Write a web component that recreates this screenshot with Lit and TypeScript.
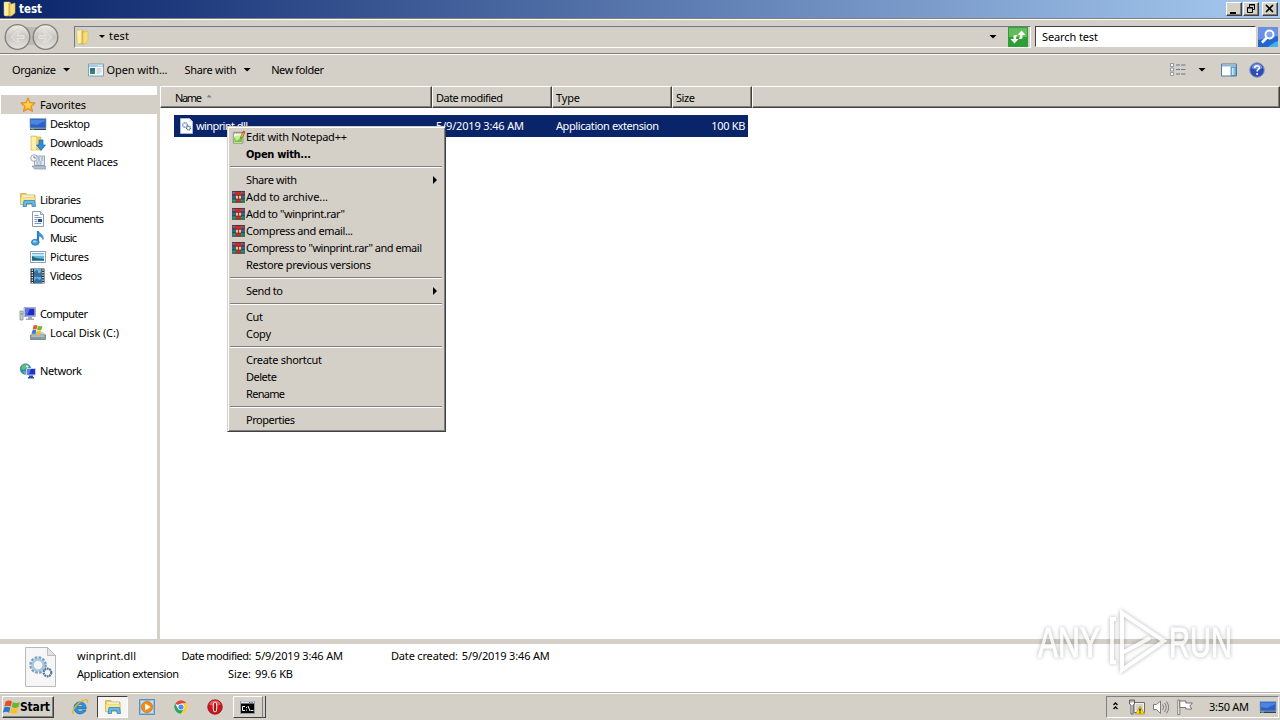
import { LitElement, html, svg, css, nothing } from 'lit';
import type { TemplateResult } from 'lit';
import { customElement, property } from 'lit/decorators.js';
import { classMap } from 'lit/directives/class-map.js';

type Glyph = TemplateResult<2>;

const glyphs: Record<string, Glyph> = {
  folder: svg`
    <path d="M2 1h6l1 2v12H3l-1-1z" fill="#e9c95f" stroke="#c9a53c" stroke-width=".6"/>
    <path d="M2 1.500 7 1v13l-4.500.8z" fill="#fbeea6"/>
    <path d="M8 3.500 13 2v10l-3 2.500-2 .5z" fill="#f6dd7c" stroke="#d8b54a" stroke-width=".6"/>
    <path d="M7 2v13" stroke="#c3a03c" stroke-width=".8"/>`,
  star: svg`
    <path d="M8 .8l2.100 4.700 5.200.5-3.900 3.500 1.200 5.100L8 12l-4.600 2.600 1.200-5.100L.7 6l5.200-.5z" fill="#ffa51f" stroke="#d9801a" stroke-width=".8"/>
    <path d="M8 3l1.400 3.300 3.300.4-2.500 2.200.7 3L8 10.400 5.200 12l.6-3.200L3.300 6.700l3.300-.4z" fill="#ffd24a"/>`,
  desktop: svg`
    <path d="M0 2.500h16V12H0z" fill="#2352b4" stroke="#8fa9cf" stroke-width=".8"/>
    <path d="M1 3.500h14v4L8 9 1 11z" fill="#4a86e0"/><path d="M1 8l6 1 8-4v6H1z" fill="#2f60c0"/>
    <path d="M0 12.500h16v1.500H0z" fill="#29405f"/><path d="M1 13h3" stroke="#7fd06a"/>`,
  downloads: svg`
    <path d="M1 1h5l1 1h4v13H1z" fill="#efd06a" stroke="#caa740" stroke-width=".6"/>
    <path d="M1.500 1.500 6 2v13l-4.500-.5z" fill="#fdf1b0"/>
    <path d="M9 5h4v5h2.500L11 15.500 6.500 10H9z" fill="#2c8de0" stroke="#1764ac" stroke-width=".7"/>`,
  recent: svg`
    <path d="M4.500 2h10v9.500h-10z" fill="#e3e9ef" stroke="#7c8fa6" stroke-width=".8"/>
    <path d="M8 4h5M8 6h5M6.500 8h5.500M6.500 10h5" stroke="#8094ad" stroke-dasharray="2 1"/>
    <circle cx="4" cy="4" r="3.300" fill="#f5f7fa" stroke="#8997a8" stroke-width=".8"/>
    <path d="M4 2v2h2" stroke="#4c5f78" stroke-width=".8" fill="none"/>
    <path d="M2 12h13.500v3H4.500z" fill="#b4c2d2" stroke="#7c8fa6" stroke-width=".7"/>`,
  libraries: svg`
    <path d="M.5 1.500h5.500l1 1.500h8v9.500H.5z" fill="#e9cf62" stroke="#c4a546" stroke-width=".7"/>
    <path d="M2 3.500h12v2H2z" fill="#fff"/><path d="M.5 5h14.500v7.500H.5z" fill="#f8e68e" stroke="#d3b650" stroke-width=".5"/>
    <path d="M4 8.500h10.500l1 6h-3.500v-3H6.500v3H3z" fill="#63b9ea" stroke="#2f86bf" stroke-width=".8"/>`,
  documents: svg`
    <path d="M2.500.5h8l3 3v12h-11z" fill="#fff" stroke="#7d8fa8" stroke-width=".9"/>
    <path d="M10.500.5v3h3" fill="#dbe4f0" stroke="#7d8fa8" stroke-width=".8"/>
    <path d="M4.500 4.500h4M4.500 6.500h7M4.500 8.500h3M4.500 10.500h3M4.500 12.500h7" stroke="#8098bb"/>
    <path d="M8 8h4v3H8z" fill="#234f90"/>`,
  music: svg`
    <path d="M8 1v11.500" stroke="#2b7cc1" stroke-width="2.200"/>
    <path d="M8 1c1 3 6 3 5 8.500 0-2-1.500-3-5-4z" fill="#3b9ae0" stroke="#2b7cc1" stroke-width=".8"/>
    <ellipse cx="5.300" cy="12.300" rx="3.900" ry="3" fill="#3f9fe2" stroke="#216ba9" stroke-width=".7"/>
    <ellipse cx="4.700" cy="11.500" rx="1.800" ry="1" fill="#a8dafa"/>`,
  pictures: svg`
    <path d="M.5 2.500h15v11H.5z" fill="#fff" stroke="#8793a1" stroke-width=".9"/>
    <path d="M2 4h12v8H2z" fill="#63b6e6"/><path d="M2 5h12v2H2z" fill="#bce6f6"/>
    <path d="M2 7l4 2 8 1v2H2z" fill="#256b68"/><path d="M2 11h12v1H2z" fill="#3d93c8"/>`,
  videos: svg`
    <path d="M.5.500h14v15H.5z" fill="#26343f"/>
    <path d="M4 1h7.500v6.500H4zM4 8.500h7.500V15H4z" fill="#63b0e2"/>
    <path d="M4 4l3-2 2 3 2.500-1v3.500H4zM4 13l3-3 2 2 2.500-1v4H4z" fill="#3470a8"/>
    <path d="M2.300 1.500v14M13 1.500v14" stroke="#fff" stroke-width="1.400" stroke-dasharray="1.200 1.300"/>
    <circle cx="9" cy="4" r="1" fill="#ef9c6c"/>`,
  computer: svg`
    <path d="M0 5h3v9H0z" fill="#c7cfd4" stroke="#79858e" stroke-width=".7"/><path d="M.8 7h1.500v2H.8z" fill="#76c04e"/>
    <path d="M4 1.500h11.500v9H4z" fill="#d8dbe8" stroke="#8c91ab" stroke-width=".7"/>
    <path d="M5 2.500h9.500v7H5z" fill="#1a2dc0"/><path d="M5 2.500h5L7 9.500H5z" fill="#5572ea"/>
    <path d="M8 11h4v1.500h2V14H6v-1.500h2z" fill="#a4a9bd"/>`,
  disk: svg`
    <path d="M1 10l3-3h9l3 3z" fill="#c3ccd2"/>
    <path d="M.5 10h15v4.500H.5z" fill="#8798a3" stroke="#5f7280" stroke-width=".7"/>
    <path d="M1.500 11h13" stroke="#d9e2e7"/><path d="M11 13h3" stroke="#5fdc4f"/>
    <path d="M3.500.5c1.500-.8 3-.6 4 0L6.500 4.500C5.500 4 4 4 2.700 4.600z" fill="#ea5a24"/>
    <path d="M8 .8c1.200.8 3 .7 4.500 0l-1 4c-1.500.8-3.200.6-4.500 0z" fill="#71b62d"/>
    <path d="M2.500 5.200c1.300-.7 2.900-.5 3.800 0L5.300 9.200c-1-.6-2.500-.6-3.800 0z" fill="#2f7ed2"/>
    <path d="M6.800 5.500c1.300.7 3 .6 4.500 0l-1 4c-1.500.7-3.200.5-4.500 0z" fill="#f8bf23"/>`,
  network: svg`
    <circle cx="5.500" cy="6" r="5.300" fill="#2a8bc4" stroke="#256089" stroke-width=".5"/>
    <path d="M2 2.500l4-1.500 1 3-3 3-3-1zM3 8l4 1v2l-3-.5z" fill="#68c164"/><path d="M6 2l3 1-1 2-2-1z" fill="#cdeefa"/>
    <path d="M6.500 5.500h9v6.500h-9z" fill="#1b35c4" stroke="#ccd2ec"/>
    <path d="M7 6h4l-2 5.500H7z" fill="#5a7cf0"/><path d="M9 12.500h4v1.500h1v1.500H8V14h1z" fill="#2a4ba8"/>`,
  dll: svg`
    <path d="M1.500.5h9l3 3v12h-12z" fill="#fff" stroke="#b9c3d2" stroke-width=".8"/>
    <path d="M10.500.5v3h3z" fill="#d3dbe6"/>
    <circle cx="6" cy="7" r="2.300" fill="none" stroke="#6e92bd" stroke-width="1.500" stroke-dasharray="1.200 .5"/>
    <circle cx="9.500" cy="10" r="1.900" fill="none" stroke="#41638e" stroke-width="1.300" stroke-dasharray="1 .5"/>`,
  openwith: svg`
    <path d="M.5 2h15v12H.5z" fill="#f6fafd" stroke="#7fa0c0"/><path d="M1 2.500h14v2.500H1z" fill="#a8cbe8"/>
    <path d="M10 3.700h4" stroke="#fff" stroke-dasharray="1 .5"/><path d="M2 6h5v6H2z" fill="#2e6f8c"/>
    <path d="M2 9h5v3H2z" fill="#348c5d"/><path d="M8.500 7h5M8.500 9h5M8.500 11h4" stroke="#b4bec8"/>`,
  views: svg`
    <path d="M.5 1.500h3v3h-3zM.5 6h3v3h-3zM.5 10.500h3v3h-3z" fill="#fff" stroke="#84909c" stroke-width=".9"/>
    <path d="M6 3h4M11 3h4.500M6 7.500h4M11 7.500h4.500M6 12h4M11 12h4.500" stroke="#66788a" stroke-width="1.200"/>`,
  preview: svg`
    <path d="M.5 2h15v12H.5z" fill="#fff" stroke="#53799a"/><path d="M1 2.500h14v2H1z" fill="#8eb6d6"/>
    <path d="M10 5h5v8.500h-5z" fill="#7ec0e6" stroke="#45799f" stroke-width=".7"/><path d="M11 6h1.500v7H11z" fill="#c9e9f8"/>`,
  help: svg`
    <circle cx="8" cy="8" r="7.300" fill="#2b4cb4" stroke="#8a98bd"/>
    <path d="M2.500 6a5.700 5.700 0 0 1 11 0Q8 9 2.500 6z" fill="#6f90e2"/>
    <path d="M5.700 6.100c0-3.200 4.800-3 4.800-.3 0 1.700-2.400 1.700-2.400 3.700" fill="none" stroke="#fff" stroke-width="1.600"/>
    <circle cx="8.100" cy="11.900" r="1" fill="#fff"/>`,
  npp: svg`
    <path d="M1.500 2.500h11v12h-11z" fill="#f4f8e8" stroke="#8a8d72"/><path d="M2.500 2.500h9" stroke="#74867f" stroke-dasharray="1 1" stroke-width="2"/>
    <path d="M2.500 8l3-2 4 1 2.500 1v5.500H2.500z" fill="#7cc63c"/><path d="M3 7l6-2v4l-4 3z" fill="#c6ec9e"/>
    <path d="M10 7l2.500-5.500 2 1L12 8l-2 1z" fill="#f6bf3d" stroke="#7a561f" stroke-width=".8"/><path d="M12.500 1l2.500 1" stroke="#d3453c" stroke-width="1.800"/>`,
  rar: svg`
    <path d="M0 1h16v4.500H0z" fill="#a82c50"/><path d="M0 5.500h16v4.500H0z" fill="#2a62b5"/><path d="M0 10h16v4.500H0z" fill="#178a4c"/>
    <path d="M1 3h14M1 12.500h14" stroke="#2aa37b" stroke-width="1.600" stroke-dasharray="3 1.500"/>
    <path d="M5 1h6v13.500H5z" fill="#cf2a26"/><path d="M4.500 6h7v4.500h-7z" fill="#f6dfa6" stroke="#5e2e26" stroke-width=".9"/>
    <path d="M8 5v6" stroke="#9a3128" stroke-width="1.600"/><path d="M0 1.200h16M0 5.500h4.500M11.500 5.500H16M0 10h4.500M11.500 10H16M0 14.500h16" stroke="#2c2840" stroke-width=".9"/>`,
  flag: svg`
    <path d="M1.500 2.700C4 1.100 6.200 1.200 8 2.500L6.700 7.600C4.900 6.400 2.700 6.300.4 7.700z" fill="#e8501f"/>
    <path d="M8.900 3c2.200 1.200 4.300 1.200 6.900 0l-1.400 5.200c-2.500 1.100-4.700 1-6.800-.2z" fill="#6eb52b"/>
    <path d="M.1 8.700c2.300-1.300 4.400-1.200 6.300 0L5.100 13.700c-1.900-1.200-4-1.200-6.300 0z" fill="#2a78d0"/>
    <path d="M7.300 9c2.200 1.100 4.400 1.100 6.900 0l-1.400 5c-2.500 1.200-4.700 1.100-6.800-.2z" fill="#fbc11e"/>`,
  ie: svg`
    <path d="M14.200 9.900H5.500c.2 2.800 4.100 3.100 5.100 1.200h3.400C11.800 16.900 2 16.100 2 8.700c0-8 12.900-7.900 12.200 1.200zM5.600 7.500h5.200c-.2-2.700-4.800-2.800-5.200 0z" fill="#2b93dd" stroke="#17609f" stroke-width=".6"/>
    <path d="M1.500 15C-1.500 11.500 8 .5 14.500.6c1.400.2 1.500 1.800.7 3" fill="none" stroke="#e8b523" stroke-width="1.300"/>`,
  player: svg`
    <path d="M.5.500h15v15H.5z" fill="#8fc2e8" stroke="#5b8fba"/><path d="M2 2h12v12H2z" fill="#c7e2f5"/>
    <circle cx="8" cy="8" r="5.700" fill="#f28a16" stroke="#c86608" stroke-width=".6"/><path d="M6.200 4.600 11.600 8l-5.400 3.400z" fill="#fff"/>`,
  chrome: svg`
    <circle cx="8" cy="8" r="6.700" fill="#fff"/>
    <path d="M8 8 2.200 4.600A6.700 6.700 0 0 1 13.800 4.600H8z" fill="#dd4a3c"/>
    <path d="M13.800 4.600A6.700 6.700 0 0 1 8 14.700l2.900-5z" fill="#fbcb35"/><path d="M8 4.600h5.800l-2.900 5z" fill="#fbcb35"/>
    <path d="M2.200 4.600A6.700 6.700 0 0 0 8 14.700l2.900-5L5 9.700z" fill="#2fa35b"/>
    <circle cx="8" cy="8" r="3.300" fill="#fff"/><circle cx="8" cy="8" r="2.600" fill="#4a8df0"/>`,
  opera: svg`
    <circle cx="8" cy="8" r="7.300" fill="#c9161d" stroke="#8d0f16" stroke-width=".7"/>
    <path d="M2 5.500a6.500 6.500 0 0 1 12 0Q8 8 2 5.500z" fill="#e8575a"/>
    <ellipse cx="8" cy="8" rx="2.300" ry="5.300" fill="#fff"/><ellipse cx="8" cy="8" rx="1.300" ry="4.500" fill="#a3141b"/>`,
  cmd: svg`
    <path d="M.5 2.500h14v12H.5z" fill="#000" stroke="#8e99a8"/><path d="M1 2.500h13v2H1z" fill="#dbe3ee"/>
    <path d="M9 3.500h4" stroke="#55606e" stroke-dasharray="1 .6"/>
    <path d="M5 7.500H2.500v4H5M6.500 8v1M6.500 10.500v1M8 7l2 5M10.500 11.500h3" fill="none" stroke="#fff"/>`,
  plug: svg`
    <path d="M5 3.500h10.500v10H5z" fill="#f4f3ee" stroke="#6c6c6c"/><path d="M6.500 5h7.500v6H6.500z" fill="#d5d4cf"/>
    <path d="M.5 1h5v4L4 6v9M2 1v2.500M4 1v2.500M.5 1v4L2 6v9h2.500" fill="#fff" stroke="#555" stroke-width=".9"/>
    <path d="M11 7l4.500 8h-9z" fill="#ffdc16" stroke="#b08f08" stroke-width=".7"/><path d="M11 9.500v3M11 13.300v1" stroke="#000" stroke-width="1.200"/>`,
  speaker: svg`
    <path d="M.5 5.500h3L7.500 2v12.500l-4-4h-3z" fill="#fff" stroke="#707070" stroke-width=".9"/>
    <path d="M9.500 5.500c1.300 1.800 1.300 3.700 0 5.500M11.500 4c2.200 3 2.200 6 0 9M13.500 2.500c2.800 4 2.800 8 0 12" fill="none" stroke="#7b7b7b"/>`,
  action: svg`
    <path d="M.8 1h2v14.500h-2z" fill="#fff" stroke="#666" stroke-width=".8"/>
    <path d="M2.800 2h6v2h6.500l-2.500 3 2 3H8.800V8.500h-6z" fill="#fff" stroke="#666" stroke-width=".9"/>`,
};

// Label whose tracking is adjusted so that its text takes up exactly `w` pixels.
@customElement('ui-label')
export class UiLabel extends LitElement {
  static styles = css`
    :host {
      display: inline-block;
      white-space: pre;
      flex: none;
    }
  `;

  @property({ type: Number }) w = 0;
  @property() text = '';

  firstUpdated() {
    const span = this.renderRoot.querySelector('span')!;
    const natural = span.getBoundingClientRect().width;
    if (this.w && natural) {
      span.style.letterSpacing = `${(this.w - natural) / (this.text.length - 1)}px`;
    }
  }

  render() {
    return html`<span>${this.text}</span>`;
  }
}

@customElement('ui-icon')
export class UiIcon extends LitElement {
  static styles = css`
    :host {
      display: block;
      width: 16px;
      height: 16px;
      flex: none;
    }

    svg {
      display: block;
      width: 100%;
      height: 100%;
      overflow: visible;
    }
  `;

  @property() name = '';

  render() {
    return html`<svg viewBox="0 0 16 16">${glyphs[this.name]}</svg>`;
  }
}

interface MenuItem {
  text: string;
  w: number;
  icon?: string;
  bold?: boolean;
  sub?: boolean;
}

const menu: (MenuItem | null)[] = [
  { text: 'Edit with Notepad++', w: 101, icon: 'npp' },
  { text: 'Open with...', w: 65, bold: true },
  null,
  { text: 'Share with', w: 51, sub: true },
  { text: 'Add to archive...', w: 82, icon: 'rar' },
  { text: 'Add to "winprint.rar"', w: 99, icon: 'rar' },
  { text: 'Compress and email...', w: 107, icon: 'rar' },
  { text: 'Compress to "winprint.rar" and email', w: 176, icon: 'rar' },
  { text: 'Restore previous versions', w: 125 },
  null,
  { text: 'Send to', w: 37, sub: true },
  null,
  { text: 'Cut', w: 17 },
  { text: 'Copy', w: 25 },
  null,
  { text: 'Create shortcut', w: 76 },
  { text: 'Delete', w: 31 },
  { text: 'Rename', w: 39 },
  null,
  { text: 'Properties', w: 49 },
];

@customElement('context-menu')
export class ContextMenu extends LitElement {
  static styles = css`
    :host {
      display: block;
      box-sizing: border-box;
      width: 219px;
      height: 306px;
      padding: 1px;
      background: #d4d0c8;
      border: 1px solid;
      border-color: #d4d0c8 #404040 #404040 #d4d0c8;
      box-shadow: inset 1px 1px #fff, inset -1px -1px #808080;
    }

    .list {
      padding: 0 2px 0 1px;
    }

    .item {
      display: flex;
      align-items: center;
      height: 17px;
      padding-left: 1px;
    }

    .slot {
      width: 15px;
      height: 16px;
    }

    .slot ui-icon {
      width: 14px;
      height: 15px;
      margin: 1px 0 0 1px;
    }

    .rar ui-icon {
      width: 13px;
      height: 14px;
      margin: 1px 0 0 1px;
    }

    .bold {
      padding-top: 2px;
      font: bold 11px 'DejaVu Sans Condensed', 'DejaVu Sans', sans-serif;
    }

    .arrow {
      margin-left: auto;
      margin-right: 5px;
      border: 4px solid transparent;
      border-left-color: #000;
      border-right: 0;
    }

    .sep {
      height: 1px;
      margin: 4px 0 3px;
      background: #808080;
      border-bottom: 1px solid #fff;
    }
  `;

  render() {
    return html`
      <div class="list">
        ${menu.map((item) =>
          item
            ? html`
                <div class="item">
                  <div class="slot ${item.icon ?? ''}">
                    ${item.icon ? html`<ui-icon name=${item.icon}></ui-icon>` : nothing}
                  </div>
                  <ui-label class=${classMap({ bold: !!item.bold })} .w=${item.w} .text=${item.text}></ui-label>
                  ${item.sub ? html`<span class="arrow"></span>` : nothing}
                </div>
              `
            : html`<div class="sep"></div>`
        )}
      </div>
    `;
  }
}

const tree: { text: string; w: number; icon: string; root?: boolean; selected?: boolean }[][] = [
  [
    { text: 'Favorites', w: 46, icon: 'star', root: true, selected: true },
    { text: 'Desktop', w: 40, icon: 'desktop' },
    { text: 'Downloads', w: 53, icon: 'downloads' },
    { text: 'Recent Places', w: 68, icon: 'recent' },
  ],
  [
    { text: 'Libraries', w: 41, icon: 'libraries', root: true },
    { text: 'Documents', w: 54, icon: 'documents' },
    { text: 'Music', w: 27, icon: 'music' },
    { text: 'Pictures', w: 39, icon: 'pictures' },
    { text: 'Videos', w: 32, icon: 'videos' },
  ],
  [
    { text: 'Computer', w: 48, icon: 'computer', root: true },
    { text: 'Local Disk (C:)', w: 69, icon: 'disk' },
  ],
  [{ text: 'Network', w: 42, icon: 'network', root: true }],
];

@customElement('app-root')
export class AppRoot extends LitElement {
  static styles = css`
    :host {
      display: flex;
      flex-direction: column;
      position: relative;
      width: 1280px;
      height: 720px;
      overflow: hidden;
      background: #d4d0c8;
      color: #000;
      font: 11px/14px 'Noto Sans', 'Open Sans', sans-serif;
    }

    .bold {
      font: bold 12px/14px 'DejaVu Sans Condensed', 'DejaVu Sans', sans-serif;
    }

    .title {
      display: flex;
      align-items: center;
      gap: 1px;
      height: 18px;
      padding: 0 2px;
      color: #fff;
      background: linear-gradient(90deg, #0a246a, #a6caf0);
    }

    .title .caption {
      flex: 1;
      font-size: 11.5px;
    }

    .win {
      display: flex;
      box-sizing: border-box;
      width: 16px;
      height: 14px;
      border: 1px solid;
      border-color: #fff #404040 #404040 #fff;
      box-shadow: inset -1px -1px #808080;
      background: #d4d0c8;
    }

    .win.close {
      margin-left: 2px;
    }

    .win svg {
      width: 14px;
      height: 12px;
    }

    .nav {
      display: flex;
      align-items: center;
      box-sizing: border-box;
      height: 36px;
      padding: 1px 2px 0 4px;
      border-top: 1px solid #808080;
      border-bottom: 1px solid #808080;
      box-shadow: inset 0 1px #fff, 0 1px #fff;
    }

    .round {
      width: 56px;
      height: 28px;
      margin-right: 14px;
    }

    .address {
      display: flex;
      align-items: center;
      box-sizing: border-box;
      width: 957px;
      height: 22px;
      margin-right: 4px;
      border: 1px solid;
      border-color: #6e7a8c #fff #fff #6e7a8c;
    }

    .address ui-icon {
      margin-right: 8px;
    }

    .down {
      width: 8px;
      height: 4px;
      background: #000;
      clip-path: polygon(0 0, 100% 0, 50% 100%);
    }

    .address ui-label {
      margin: -2px auto 0 5px;
    }

    .down.tiny {
      width: 6px;
      height: 3px;
      margin-right: -1px;
    }

    .go {
      width: 20px;
      height: 20px;
      margin: 0 2px 0 11px;
    }

    .search {
      flex: 1;
      box-sizing: border-box;
      height: 21px;
      padding: 3px 6px 0;
      background: #fff;
      border: 1px solid;
      border-color: #404040 #fff #fff #404040;
    }

    .find {
      width: 20px;
      height: 20px;
      margin-left: 2px;
    }

    .tools {
      display: flex;
      align-items: center;
      box-sizing: border-box;
      height: 32px;
      padding: 0 15px 1px 12px;
    }

    .tools .down {
      margin-left: 7px;
    }

    .tools .with {
      margin: 0 3px 0 17px;
    }

    .tools .share {
      margin-left: 17px;
    }

    .tools .new {
      margin-left: 20px;
      margin-right: auto;
    }

    .tools .gap {
      margin-left: 15px;
    }

    .tools .small {
      margin-left: 12px;
    }

    .main {
      display: flex;
      height: 553px;
    }

    .tree {
      box-sizing: border-box;
      width: 157px;
      padding-top: 9px;
      background: #fff;
    }

    .group {
      margin-bottom: 19px;
    }

    .node {
      display: flex;
      align-items: center;
      gap: 4px;
      box-sizing: border-box;
      height: 19px;
      margin-left: 1px;
      padding-left: 29px;
    }

    .node.root {
      padding-left: 19px;
    }

    .node.selected {
      background: #d4d0c8;
    }

    .files {
      flex: 1;
      margin-left: 3px;
      background: #fff;
    }

    .head {
      display: grid;
      grid-template-columns: 272px 120px 120px 80px 1fr;
      height: 22px;
    }

    .col {
      display: flex;
      align-items: center;
      box-sizing: border-box;
      padding: 2px 0 0 3px;
      background: #d4d0c8;
      border: 1px solid;
      border-color: #fff #404040 #404040 #fff;
      box-shadow: inset -1px -1px #808080;
    }

    .col:first-child {
      padding-left: 14px;
    }

    .up {
      width: 5px;
      height: 3px;
      margin: -4px 0 0 6px;
      background: #808080;
      clip-path: polygon(0 100%, 50% 0, 100% 100%);
    }

    .file {
      display: grid;
      grid-template-columns: 262px 120px 120px 1fr;
      align-items: center;
      box-sizing: border-box;
      width: 574px;
      height: 22px;
      margin: 7px 0 0 14px;
      padding-right: 3px;
      color: #fff;
      background: #0a246a;
    }

    .name {
      display: flex;
      align-items: center;
      gap: 1px;
      padding-left: 5px;
    }

    .size {
      justify-self: end;
    }

    .details {
      display: flex;
      box-sizing: border-box;
      height: 48px;
      margin-top: 5px;
      padding: 3px 0 0 25px;
      background: #fff;
    }

    .doc {
      width: 31px;
      height: 40px;
      margin-right: 21px;
    }

    .facts {
      display: grid;
      grid-template-columns: 104px 74px 136px auto auto;
      grid-template-rows: 18px 18px;
      align-items: center;
      justify-items: start;
      height: 36px;
    }

    .key {
      justify-self: end;
      padding-right: 4px;
    }

    .taskbar {
      display: flex;
      align-items: center;
      box-sizing: border-box;
      height: 28px;
      padding: 1px 1px 0 2px;
      border-top: 1px solid #b9b5ad;
      box-shadow: inset 0 1px #fff;
    }

    .start {
      display: flex;
      align-items: center;
      box-sizing: border-box;
      width: 52px;
      height: 22px;
      padding-left: 1px;
      border: 1px solid;
      border-color: #fff #404040 #404040 #fff;
      box-shadow: inset -1px -1px #808080;
    }

    .pin {
      margin-left: 18px;
    }

    .task {
      display: flex;
      align-items: center;
      justify-content: center;
      box-sizing: border-box;
      width: 31px;
      height: 22px;
      border: 1px solid;
    }

    .task.pressed {
      margin: 0 11px 0 9px;
      background: #f6f5f2;
      border-color: #404040 #fff #fff #404040;
    }

    .task.raised {
      width: 30px;
      margin-left: 10px;
      border-color: #fff #808080 #404040 #fff;
    }

    .stack {
      box-sizing: border-box;
      width: 3px;
      height: 22px;
      border-right: 1px solid #404040;
      border-bottom: 1px solid #404040;
    }

    .tray {
      display: flex;
      align-items: center;
      box-sizing: border-box;
      width: 173px;
      height: 22px;
      margin-left: auto;
      padding-left: 6px;
      border: 1px solid;
      border-color: #808080 #fff #fff #808080;
    }

    .tray .chev {
      flex: none;
      width: 5px;
      height: 8px;
      margin: -2px 11px 0 0;
    }

    .tray ui-icon {
      margin-right: 8px;
    }

    .tray ui-label {
      margin: 0 11px 0 8px;
    }

    .tray ui-icon:last-child {
      margin-right: 0;
    }

    context-menu {
      position: absolute;
      left: 227px;
      top: 126px;
    }

    .watermark {
      position: absolute;
      left: 1030px;
      top: 600px;
      width: 240px;
      height: 80px;
      filter: drop-shadow(0 0 2px rgba(0, 0, 0, 0.4));
      opacity: 0.75;
    }

    .watermark text {
      font: 43px 'Liberation Sans', sans-serif;
      fill: #fff;
      stroke: #fff;
      stroke-width: 1px;
    }
  `;

  renderNav() {
    return html`
      <div class="nav">
        <svg class="round" viewBox="0 0 56 28">
          <defs>
            <linearGradient id="ball" x2="0" y2="1">
              <stop stop-color="#eeecea" /><stop offset=".5" stop-color="#c9c6c1" /><stop offset="1" stop-color="#e6e4e0" />
            </linearGradient>
          </defs>
          <path d="M14 4h28v18H14z" fill="#bdbab5" />
          <circle cx="13.500" cy="14" r="12.300" fill="url(#ball)" stroke="#807e7b" stroke-width="1.300" />
          <circle cx="41.500" cy="14" r="12.300" fill="url(#ball)" stroke="#807e7b" stroke-width="1.300" />
          <path
            d="M20 12.500h-7l2.500-3.500h-3L7 14l5.500 5h3L13 15.500h7zM35 12.500h7L39.500 9h3l5.500 5-5.500 5h-3l2.500-3.500h-7z"
            fill="#d6d3cf"
            stroke="#e6e4e1"
          />
        </svg>
        <div class="address">
          <ui-icon name="folder"></ui-icon>
          <span class="down tiny"></span>
          <ui-label .w=${20} text="test"></ui-label>
          <span class="down"></span>
          <svg class="go" viewBox="0 0 20 20">
            <path d="M0 0h20v20H0z" fill="#2f9e36" />
            <path d="M1 1h18v9H1z" fill="#62bd58" />
            <path d="M5.500 11V8H2.500L6.500 3.500 10.500 8H8c0 2 .5 3 1.500 4-2.500 0-4-.3-4-1zM14.500 9v3h3l-4 4.500-4-4.500H12c0-2-.5-3-1.500-4 2.500 0 4 .3 4 1z" fill="#fff" transform="matrix(-1 0 0 1 20 0)" />
          </svg>
        </div>
        <div class="search"><ui-label .w=${56} text="Search test"></ui-label></div>
        <svg class="find" viewBox="0 0 20 20">
          <path d="M0 0h20v20H0z" fill="#2466cf" /><path d="M0 0h20v9L0 13z" fill="#6b8fe4" />
          <path d="M10 20q6-5 10-6v6z" fill="#3cb4ef" />
          <circle cx="11.500" cy="7.500" r="4" fill="#7fa2ec" stroke="#fff" stroke-width="2" />
          <path d="M8.500 11 4 15.500" stroke="#fff" stroke-width="2.500" />
        </svg>
      </div>
    `;
  }

  renderTree() {
    return html`
      <div class="tree">
        ${tree.map(
          (group) => html`
            <div class="group">
              ${group.map(
                (n) => html`
                  <div class=${classMap({ node: true, root: !!n.root, selected: !!n.selected })}>
                    <ui-icon name=${n.icon}></ui-icon>
                    <ui-label .w=${n.w} .text=${n.text}></ui-label>
                  </div>
                `
              )}
            </div>
          `
        )}
      </div>
    `;
  }

  render() {
    return html`
      <div class="title">
        <ui-icon name="folder"></ui-icon>
        <ui-label class="caption bold" .w=${23} text="test"></ui-label>
        <span class="win"><svg viewBox="0 0 14 12"><path d="M3 9h6v2H3z" /></svg></span>
        <span class="win"
          ><svg viewBox="0 0 14 12">
            <path d="M5.500 4V1.500h5v5H8M5 2h6M3.500 4.500h5v5h-5zM3 5h6" fill="none" stroke="#000" /></svg
        ></span>
        <span class="win close"
          ><svg viewBox="0 0 14 12"><path d="M3 2l7 7M10 2L3 9" stroke="#000" stroke-width="1.600" /></svg
        ></span>
      </div>
      ${this.renderNav()}
      <div class="tools">
        <ui-label .w=${44} text="Organize"></ui-label><span class="down"></span>
        <ui-icon class="with" name="openwith"></ui-icon><ui-label .w=${61} text="Open with..."></ui-label>
        <ui-label class="share" .w=${52} text="Share with"></ui-label><span class="down"></span>
        <ui-label class="new" .w=${53} text="New folder"></ui-label>
        <ui-icon name="views"></ui-icon><span class="down small"></span>
        <ui-icon class="gap" name="preview"></ui-icon>
        <ui-icon class="small" name="help"></ui-icon>
      </div>
      <div class="main">
        ${this.renderTree()}
        <div class="files">
          <div class="head">
            <div class="col"><ui-label .w=${27} text="Name"></ui-label><span class="up"></span></div>
            <div class="col"><ui-label .w=${67} text="Date modified"></ui-label></div>
            <div class="col"><ui-label .w=${24} text="Type"></ui-label></div>
            <div class="col"><ui-label .w=${19} text="Size"></ui-label></div>
            <div class="col"></div>
          </div>
          <div class="file">
            <div class="name"><ui-icon name="dll"></ui-icon><ui-label .w=${52} text="winprint.dll"></ui-label></div>
            <ui-label .w=${88} text="5/9/2019 3:46 AM"></ui-label>
            <ui-label .w=${103} text="Application extension"></ui-label>
            <ui-label class="size" .w=${34} text="100 KB"></ui-label>
          </div>
        </div>
      </div>
      <div class="details">
        <svg class="doc" viewBox="0 0 31 40">
          <path d="M.5.500h22l8 8v31H.5z" fill="#f6f6f6" stroke="#b9b9b9" />
          <path d="M22.500.5v8h8z" fill="#e2e2e2" stroke="#b0b0b0" stroke-width=".8" />
          <circle cx="13" cy="18" r="7" fill="none" stroke="#7d9fc0" stroke-width="3.500" stroke-dasharray="2.500 1.200" />
          <circle cx="13" cy="18" r="5.500" fill="none" stroke="#a9c8e2" stroke-width="2.500" />
          <circle cx="22.500" cy="25.500" r="3.800" fill="#f6f6f6" stroke="#55789b" stroke-width="2.200" stroke-dasharray="1.800 .6" />
        </svg>
        <div class="facts">
          <ui-label .w=${59} text="winprint.dll"></ui-label>
          <ui-label class="key" .w=${70} text="Date modified:"></ui-label>
          <ui-label .w=${88} text="5/9/2019 3:46 AM"></ui-label>
          <ui-label class="key" .w=${67} text="Date created:"></ui-label>
          <ui-label .w=${88} text="5/9/2019 3:46 AM"></ui-label>
          <ui-label .w=${102} text="Application extension"></ui-label>
          <ui-label class="key" .w=${23} text="Size:"></ui-label>
          <ui-label .w=${38} text="99.6 KB"></ui-label>
        </div>
      </div>
      <div class="taskbar">
        <div class="start"><ui-icon name="flag"></ui-icon><ui-label class="bold" .w=${30} text="Start"></ui-label></div>
        <ui-icon class="pin" name="ie"></ui-icon>
        <div class="task pressed"><ui-icon name="libraries"></ui-icon></div>
        <ui-icon name="player"></ui-icon>
        <ui-icon class="pin" name="chrome"></ui-icon>
        <ui-icon class="pin" name="opera"></ui-icon>
        <div class="task raised"><ui-icon name="cmd"></ui-icon></div>
        <div class="stack"></div>
        <div class="tray">
          <svg class="chev" viewBox="0 0 5 8"><path d="M.5 3 2.500 1l2 2M.5 7l2-2 2 2" fill="none" stroke="#000" stroke-width="1.300" /></svg>
          <ui-icon name="plug"></ui-icon>
          <ui-icon name="speaker"></ui-icon>
          <ui-icon name="action"></ui-icon>
          <ui-label .w=${40} text="3:50 AM"></ui-label>
          <ui-icon name="desktop"></ui-icon>
        </div>
      </div>
      <context-menu></context-menu>
      <svg class="watermark" viewBox="0 0 240 80">
        <text x="8" y="57" textLength="62" lengthAdjust="spacingAndGlyphs">ANY</text>
        <text x="139" y="57" textLength="63" lengthAdjust="spacingAndGlyphs">RUN</text>
        <path d="M86 19h-4v43h4M92 12v58l42-29-42-28v40l28-15" fill="none" stroke="#fff" stroke-width="4" />
      </svg>
    `;
  }
}
